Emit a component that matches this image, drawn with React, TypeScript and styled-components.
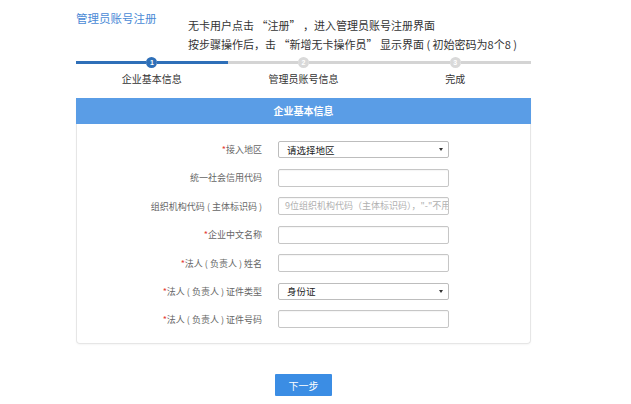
import React from "react";
import styled, { createGlobalStyle } from "styled-components";

const GlobalStyle = createGlobalStyle`
  html, body {
    margin: 0;
    padding: 0;
    background: #ffffff;
    font-family: "Noto Sans CJK SC", "Noto Sans", sans-serif;
  }
`;

const Page = styled.div`
  width: 455px;
  padding-left: 76px;
  padding-top: 9px;
`;

const Header = styled.div`
  display: flex;
  align-items: flex-start;
`;

const Title = styled.div`
  width: 112px;
  font-size: 11.5px;
  line-height: 19px;
  color: #4a8ad6;
`;

const Desc = styled.div`
  margin-top: 7px;
  font-size: 11px;
  line-height: 19px;
  color: #333;
  white-space: nowrap;
`;

const Steps = styled.div`
  display: grid;
  grid-template-columns: repeat(3, 1fr);
  margin-top: 3px;
`;

const Step = styled.div`
  display: flex;
  flex-direction: column;
  align-items: center;
`;

const Track = styled.div`
  width: 100%;
  display: flex;
  align-items: center;
  height: 11px;
`;

const Line = styled.div<{ $active?: boolean }>`
  flex: 1;
  height: 3px;
  background: ${(p) => (p.$active ? "#2e6fb8" : "#d4d4d4")};
`;

const Dot = styled.div<{ $active?: boolean }>`
  width: 11px;
  height: 11px;
  border-radius: 50%;
  background: ${(p) => (p.$active ? "#2e6fb8" : "#d9d9d9")};
  color: #fff;
  font-size: 7px;
  font-weight: bold;
  line-height: 11px;
  text-align: center;
  font-family: "Liberation Sans", sans-serif;
`;

const StepLabel = styled.div`
  margin-top: 4px;
  font-size: 10px;
  line-height: 14px;
  color: #333;
`;

const Card = styled.div`
  margin-top: 12px;
  border: 1px solid #e6e6e6;
  border-top: none;
  border-radius: 0 0 4px 4px;
  box-shadow: 0 1px 2px rgba(0, 0, 0, 0.04);
`;

const CardHead = styled.div`
  height: 26px;
  line-height: 26px;
  background: #5a9de6;
  color: #fff;
  font-size: 10px;
  font-weight: bold;
  text-align: center;
  margin: 0 -1px;
`;

const Form = styled.div`
  display: grid;
  grid-template-columns: 185px 171px;
  column-gap: 16px;
  row-gap: 10.5px;
  align-items: center;
  padding: 17px 0 15px;
`;

const Label = styled.div`
  text-align: right;
  font-size: 9px;
  color: #666;
  white-space: pre;
`;

const Star = styled.span`
  color: #e53935;
`;

const Input = styled.div`
  height: 18px;
  box-sizing: border-box;
  border: 1px solid #c6c6c6;
  border-radius: 2px;
  box-shadow: inset 0 1px 1px rgba(0, 0, 0, 0.04);
  padding: 0 6px;
  font-size: 9px;
  line-height: 16px;
  color: #b0b0b0;
  overflow: hidden;
  white-space: nowrap;
`;

const Select = styled.div`
  height: 17px;
  box-sizing: border-box;
  border: 1px solid #bdbdbd;
  border-radius: 2px;
  padding: 0 5px 0 8px;
  display: flex;
  align-items: center;
  justify-content: space-between;
  font-size: 9.5px;
  color: #222;
`;

const Caret = styled.span`
  width: 0;
  height: 0;
  border-left: 2px solid transparent;
  border-right: 2px solid transparent;
  border-top: 3px solid #333;
`;

const Actions = styled.div`
  display: flex;
  justify-content: center;
  margin-top: 30px;
`;

const Button = styled.button`
  width: 57px;
  height: 22px;
  border: none;
  border-radius: 1px;
  background: #3b8de4;
  color: #fff;
  font-family: inherit;
  font-size: 10px;
  padding: 0;
`;

const steps = ["企业基本信息", "管理员账号信息", "完成"];

type Field = { label: string; required?: boolean; kind: "input" | "select"; value?: string; placeholder?: string };

const fields: Field[] = [
  { label: "接入地区", required: true, kind: "select", value: "请选择地区" },
  { label: "统一社会信用代码", kind: "input" },
  { label: "组织机构代码 ( 主体标识码 )", kind: "input", placeholder: "9位组织机构代码（主体标识码），\"-\"不用录入" },
  { label: "企业中文名称", required: true, kind: "input" },
  { label: "法人 ( 负责人 ) 姓名", required: true, kind: "input" },
  { label: "法人 ( 负责人 ) 证件类型", required: true, kind: "select", value: "身份证" },
  { label: "法人 ( 负责人 ) 证件号码", required: true, kind: "input" },
];

const App = () => {
  return (
    <>
      <GlobalStyle />
      <Page>
        <Header>
          <Title>管理员账号注册</Title>
          <Desc>
            无卡用户点击 “注册” ，进入管理员账号注册界面
            <br />
            按步骤操作后，击 “新增无卡操作员” 显示界面 ( 初始密码为8个8 )
          </Desc>
        </Header>
        <Steps>
          {steps.map((s, i) => (
            <Step key={s}>
              <Track>
                <Line $active={i === 0} />
                <Dot $active={i === 0}>{i + 1}</Dot>
                <Line $active={i === 0} />
              </Track>
              <StepLabel>{s}</StepLabel>
            </Step>
          ))}
        </Steps>
        <Card>
          <CardHead>企业基本信息</CardHead>
          <Form>
            {fields.map((f) => (
              <React.Fragment key={f.label}>
                <Label>
                  {f.required && <Star>*</Star>}
                  {f.label}
                </Label>
                {f.kind === "select" ? (
                  <Select>
                    {f.value}
                    <Caret />
                  </Select>
                ) : (
                  <Input>{f.placeholder}</Input>
                )}
              </React.Fragment>
            ))}
          </Form>
        </Card>
        <Actions>
          <Button>下一步</Button>
        </Actions>
      </Page>
    </>
  );
};

export default App;
